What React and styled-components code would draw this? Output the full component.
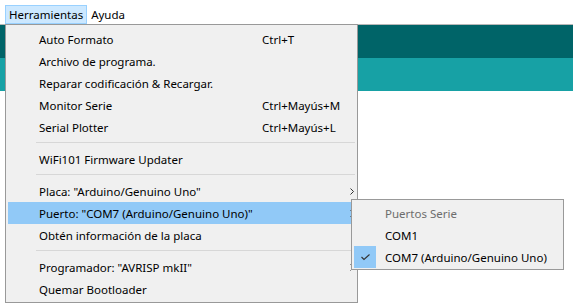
import React from 'react';
import styled, { createGlobalStyle } from 'styled-components';

const GlobalStyle = createGlobalStyle`
  html, body {
    margin: 0;
    padding: 0;
    background: #fff;
  }
  body {
    font-family: "Segoe UI", "Noto Sans", "Liberation Sans", sans-serif;
    font-size: 11.5px;
    color: #000;
  }
`;

const Window = styled.div`
  position: relative;
  width: 573px;
  height: 308px;
  overflow: hidden;
  background: #fff;
`;

const MenuBar = styled.div`
  display: flex;
  align-items: flex-end;
  padding-left: 5px;
  border-bottom: 1px solid #b8b8b8;
  box-sizing: border-box;
  height: 25px;
`;

const MenuTitle = styled.div`
  height: 19px;
  line-height: 17px;
  padding: 0 3px;
  box-sizing: border-box;
  border: 1px solid ${(p) => (p.$active ? '#99d1ff' : 'transparent')};
  background: ${(p) => (p.$active ? '#cce8ff' : 'transparent')};
`;

const Band = styled.div`
  height: ${(p) => p.$h}px;
  background: ${(p) => p.$color};
`;

const Dropdown = styled.div`
  position: absolute;
  left: 5px;
  top: 24px;
  width: 353px;
  box-sizing: border-box;
  background: #f0f0f0;
  border: 1px solid #999;
  padding: 3px 0 2px;
`;

const Item = styled.div`
  display: grid;
  grid-template-columns: 223px 1fr 14px;
  align-items: center;
  height: 22px;
  margin: 0 2px;
  padding-left: 31px;
  background: ${(p) => (p.$hover ? '#91c9f7' : 'transparent')};
  white-space: nowrap;
`;

const Shortcut = styled.span``;

const Arrow = styled.svg`
  width: 4px;
  height: 7px;
  justify-self: end;
  margin-right: 1px;
`;

const Separator = styled.div`
  height: 1px;
  background: #d7d7d7;
  margin: 4px 2px 5px 30px;
`;

const Submenu = styled.div`
  position: absolute;
  left: 351px;
  top: 199px;
  width: 213px;
  box-sizing: border-box;
  background: #f0f0f0;
  border: 1px solid #999;
  padding: 2px 2px 1px;
`;

const SubItem = styled.div`
  display: grid;
  grid-template-columns: 22px 1fr;
  column-gap: 9px;
  align-items: center;
  height: 22px;
  color: ${(p) => (p.$disabled ? '#6d6d6d' : '#000')};
  white-space: nowrap;
`;

const CheckCell = styled.div`
  width: 22px;
  height: 22px;
  display: flex;
  align-items: center;
  justify-content: center;
  background: ${(p) => (p.$checked ? '#91c9f7' : 'transparent')};
`;

const chevron = (
  <Arrow viewBox="0 0 4 7">
    <polyline points="0.5,0.5 3.5,3.5 0.5,6.5" fill="none" stroke="#333" strokeWidth="1" />
  </Arrow>
);

const items = [
  { label: 'Auto Formato', shortcut: 'Ctrl+T' },
  { label: 'Archivo de programa.' },
  { label: 'Reparar codificación & Recargar.' },
  { label: 'Monitor Serie', shortcut: 'Ctrl+Mayús+M' },
  { label: 'Serial Plotter', shortcut: 'Ctrl+Mayús+L' },
  'sep',
  { label: 'WiFi101 Firmware Updater' },
  'sep',
  { label: 'Placa: "Arduino/Genuino Uno"', sub: true },
  { label: 'Puerto: "COM7 (Arduino/Genuino Uno)"', sub: true, hover: true },
  { label: 'Obtén información de la placa' },
  'sep',
  { label: 'Programador: "AVRISP mkII"', sub: true },
  { label: 'Quemar Bootloader' },
];

export default function App() {
  return (
    <Window>
      <GlobalStyle />
      <MenuBar>
        <MenuTitle $active>Herramientas</MenuTitle>
        <MenuTitle>Ayuda</MenuTitle>
      </MenuBar>
      <Band $h={33} $color="#006468" />
      <Band $h={33} $color="#17a1a5" />

      <Dropdown>
        {items.map((it, i) =>
          it === 'sep' ? (
            <Separator key={i} />
          ) : (
            <Item key={i} $hover={it.hover}>
              <span>{it.label}</span>
              <Shortcut>{it.shortcut}</Shortcut>
              {it.sub ? chevron : <span />}
            </Item>
          )
        )}
      </Dropdown>

      <Submenu>
        <SubItem $disabled>
          <CheckCell />
          <span>Puertos Serie</span>
        </SubItem>
        <SubItem>
          <CheckCell />
          <span>COM1</span>
        </SubItem>
        <SubItem>
          <CheckCell $checked>
            <svg width="9" height="7" viewBox="0 0 9 7">
              <polyline points="0.5,3 3,5.5 8.5,0.5" fill="none" stroke="#333" strokeWidth="1.1" />
            </svg>
          </CheckCell>
          <span>COM7 (Arduino/Genuino Uno)</span>
        </SubItem>
      </Submenu>
    </Window>
  );
}
